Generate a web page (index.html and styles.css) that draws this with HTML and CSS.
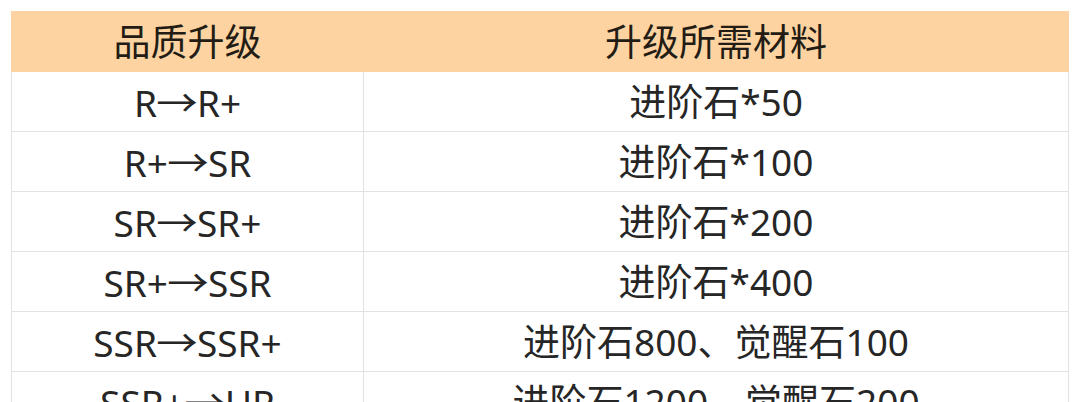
FILE: index.html
```
<!DOCTYPE html>
<html lang="zh">
<head>
<meta charset="utf-8">
<link rel="stylesheet" href="styles.css">
</head>
<body>
<div class="wrap">
<table class="upgrade">
<thead>
<tr><th class="c1">品质升级</th><th class="c2">升级所需材料</th></tr>
</thead>
<tbody>
<tr><td>R<span class="arr">→</span>R+</td><td>进阶石*50</td></tr>
<tr><td>R+<span class="arr">→</span>SR</td><td>进阶石*100</td></tr>
<tr><td>SR<span class="arr">→</span>SR+</td><td>进阶石*200</td></tr>
<tr><td>SR+<span class="arr">→</span>SSR</td><td>进阶石*400</td></tr>
<tr><td>SSR<span class="arr">→</span>SSR+</td><td>进阶石800、觉醒石100</td></tr>
<tr><td>SSR+<span class="arr">→</span>UR</td><td>进阶石1200、觉醒石200</td></tr>
</tbody>
</table>
</div>
</body>
</html>
```

FILE: styles.css
```
html, body {
  margin: 0;
  padding: 0;
  background: #ffffff;
  overflow: hidden;
}
.wrap {
  padding: 11px 11px 0 11px;
}
.upgrade {
  border-collapse: collapse;
  width: 1058px;
  table-layout: fixed;
  font-family: "Noto Sans", "Noto Sans CJK SC", sans-serif;
  font-size: 37px;
  color: #262626;
}
.upgrade th,
.upgrade td {
  height: 59px;
  padding: 0;
  border: 1px solid #e2e2e2;
  text-align: center;
  vertical-align: middle;
  font-weight: normal;
  line-height: 1;
}
.upgrade thead th {
  background: #fdd3a1;
  border-color: #fdd3a1;
  color: #231c14;
}
.arr {
  display: inline-block;
  width: 40px;
  text-align: center;
  font-family: "Noto Sans CJK SC", sans-serif;
  transform: scaleX(1.12);
}
.c1 { width: 351px; }
```
